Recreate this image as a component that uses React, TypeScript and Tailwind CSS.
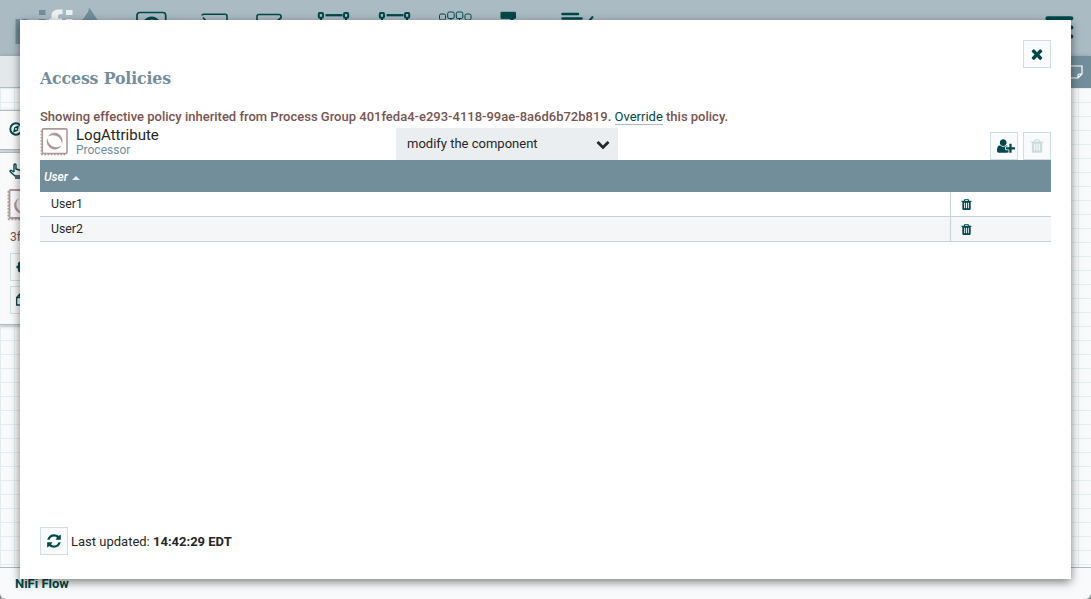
import React from "react";

const TIMES =
  "M1490 1322q0 40-28 68l-136 136q-28 28-68 28t-68-28l-294-294-294 294q-28 28-68 28t-68-28l-136-136q-28-28-28-68t28-68l294-294-294-294q-28-28-28-68t28-68l136-136q28-28 68-28t68 28l294 294 294-294q28-28 68-28t68 28l136 136q28 28 28 68t-28 68l-294 294 294 294q28 28 28 68z";
const REFRESH =
  "M1639 1056q0 5-1 7-64 268-268 434.5t-478 166.5q-146 0-282.5-55t-243.5-157l-129 129q-19 19-45 19t-45-19-19-45v-448q0-26 19-45t45-19h448q26 0 45 19t19 45-19 45l-137 137q71 66 161 102t187 36q134 0 250-65t186-179q11-17 53-117 8-23 30-23h192q13 0 22.5 9.5t9.5 22.5zm25-800v448q0 26-19 45t-45 19h-448q-26 0-45-19t-19-45 19-45l138-138q-148-137-349-137-134 0-250 65t-186 179q-11 17-53 117-8 23-30 23h-199q-13 0-22.5-9.5t-9.5-22.5v-7q65-268 270-434.5t480-166.5q146 0 284 55.5t245 156.5l130-129q19-19 45-19t45 19 19 45z";
const TRASH =
  "M704 1376v-704q0-14-9-23t-23-9h-64q-14 0-23 9t-9 23v704q0 14 9 23t23 9h64q14 0 23-9t9-23zm256 0v-704q0-14-9-23t-23-9h-64q-14 0-23 9t-9 23v704q0 14 9 23t23 9h64q14 0 23-9t9-23zm256 0v-704q0-14-9-23t-23-9h-64q-14 0-23 9t-9 23v704q0 14 9 23t23 9h64q14 0 23-9t9-23zm-544-992h448l-48-117q-7-9-17-11h-317q-10 2-17 11zm928 32v64q0 14-9 23t-23 9h-96v948q0 83-47 143.5t-113 60.5h-832q-66 0-113-58.5t-47-141.5v-952h-96q-14 0-23-9t-9-23v-64q0-14 9-23t23-9h309l70-167q15-37 54-63t79-26h320q40 0 79 26t54 63l70 167h309q14 0 23 9t9 23z";
const USER_PLUS =
  "M704 896q-159 0-271.5-112.5t-112.5-271.5 112.5-271.5 271.5-112.5 271.5 112.5 112.5 271.5-112.5 271.5-271.5 112.5zm960 128h352q13 0 22.5 9.5t9.5 22.5v192q0 13-9.5 22.5t-22.5 9.5h-352v352q0 13-9.5 22.5t-22.5 9.5h-192q-13 0-22.5-9.5t-9.5-22.5v-352h-352q-13 0-22.5-9.5t-9.5-22.5v-192q0-13 9.5-22.5t22.5-9.5h352v-352q0-13 9.5-22.5t22.5-9.5h192q13 0 22.5 9.5t9.5 22.5v352zm-736 224q0 52 38 90t90 38h256v238q-68 50-171 50h-874q-121 0-194-69t-73-190q0-53 3.5-103.5t14-109 26.5-108.5 43-97.5 62-81 85.5-53.5 111.5-20q19 0 39 17 79 61 154.500 91.500t164.500 30.500 164.500-30.500 154.500-91.500q20-17 39-17 132 0 217 96h-223q-52 0-90 38t-38 90v192z";
const CHEVRON =
  "M1683 808l-742 741q-19 19-45 19t-45-19l-742-741q-19-19-19-45.5t19-45.5l166-165q19-19 45-19t45 19l531 531 531-531q19-19 45-19t45 19l166 165q19 19 19 45.5t-19 45.5z";

function Glyph({ d, className, box = "0 0 1792 1792" }: { d: string; className: string; box?: string }) {
  return (
    <svg viewBox={box} className={className} fill="currentColor">
      <path d={d} />
    </svg>
  );
}

function SquareButton({ children, muted = false }: { children: React.ReactNode; muted?: boolean }) {
  return (
    <button
      className={
        muted
          ? "flex size-7 shrink-0 items-center justify-center border border-[#cfdedf] bg-[#f9fafb] text-[#cddbdc]"
          : "flex size-7 shrink-0 items-center justify-center border border-[#cfdedf] bg-[#f9fafb] text-[#004849]"
      }
    >
      {children}
    </button>
  );
}

function ProcessorIcon() {
  return (
    <svg viewBox="0 0 28 28" className="size-7 shrink-0" fill="none" stroke="#ad9897">
      <rect x="2.300" y="0.900" width="24.700" height="24.600" rx="1.200" strokeWidth="1.600" />
      <path d="M1.200 2.500V26M1.200 26.600H26" strokeWidth="1.300" strokeDasharray="1.700 1.500" />
      <path d="M8 8.500C11.500 3.200 19 3.600 21.800 9.500C22.900 12 22.700 14.500 21.900 16.500C21.800 9.500 15.500 5 8 8.500Z" fill="#ad9897" stroke="none" />
      <path d="M21.500 18C18 23 10.500 22.700 7.500 16.800C6.400 14.400 6.700 12 7.500 10C7.600 16.800 14 21.400 21.500 18Z" fill="#ad9897" stroke="none" />
    </svg>
  );
}

function Toolbar() {
  return (
    <header className="h-14 shrink-0 bg-[#aabbc3]">
      <svg width="1091" height="56" viewBox="0 0 1091 56" fill="none" stroke="#004849">
        <g stroke="none">
          <path d="M15.500 19H20v25h-4.500z" fill="#728e9b" />
          <path d="M20 20.500Q24 17 30 20.500z" fill="#728e9b" />
          <rect x="39" y="10" width="6.500" height="5" fill="#728e9b" />
          <rect x="39" y="19" width="6.500" height="5" fill="#728e9b" />
          <path d="M51.500 24V15Q52 9.500 59 9.500h3.500v4.500h-2q-2.500 0-2.500 3v7zM49 18.500h13v3H49z" fill="#eef1f3" />
          <rect x="66" y="10" width="6.500" height="5" fill="#eef1f3" />
          <rect x="66" y="19" width="6.500" height="5" fill="#eef1f3" />
          <path d="M89.500 8L99 22H80.500z" fill="#728e9b" />
          <path d="M88.500 10L82.500 19" stroke="#c8d3d8" strokeWidth="0.8" />
        </g>
        <path d="M137 24V15.500Q137 12.500 140 12.500H163Q165.700 12.500 165.700 15.500V24" strokeWidth="1.700" />
        <path d="M144.500 21.500Q152 14.500 158.500 21.500" strokeWidth="2.800" />
        <path d="M202 15.500Q202 14.300 204 14.300H225Q227 14.300 227 16.300V24M203 17.500L206 21" strokeWidth="1.600" />
        <path d="M257 24V16.500Q257 14.500 259 14.500H279Q281 14.500 281 16.500V18L277 21" strokeWidth="1.600" />
        {[318, 379].map((x) => (
          <g key={x}>
            <rect x={x + 0.800} y="13" width="4.200" height="4.700" rx="0.900" strokeWidth="2" />
            <rect x={x + 26} y="13" width="4.200" height="4.700" rx="0.900" strokeWidth="2" />
            <path d={`M${x + 7.500} 15.200h17`} strokeWidth="2.300" />
            <path d={`M${x + 3} 18v3M${x + 28} 18v3`} strokeWidth="2" />
          </g>
        ))}
        <g strokeWidth="1">
          <rect x="439.500" y="14" width="6" height="6" rx="1.500" />
          <rect x="447.700" y="12" width="6.500" height="6.500" rx="1.500" />
          <rect x="456.300" y="12" width="6.500" height="6.500" rx="1.500" />
          <rect x="465" y="14" width="6" height="6" rx="1.500" />
          <path d="M451 18.500v2M459.500 18.500v2" />
        </g>
        <path d="M501 12.300h14.500v6H513v2l-4-2h-8z" fill="#004849" strokeWidth="1" />
        <path d="M562.500 14h15.500M562.500 18.500h19" strokeWidth="2.500" strokeLinecap="round" />
        <path d="M589.500 20.500L593 16.500" strokeWidth="2" />
        <path d="M1047.500 18.300h23.800M1060 27.500h11.300M1060 36.500h11.300" strokeWidth="4.200" strokeLinecap="round" />
      </svg>
    </header>
  );
}

function Canvas() {
  return (
    <div className="flex h-full w-full flex-col">
      <Toolbar />
      <div className="flex h-8 shrink-0 border-b border-[#aabbc3] bg-[#e3e8eb] shadow-[0_1px_5px_rgba(0,0,0,0.25)]">
        <div className="flex-1" />
        <div className="flex h-8 w-[91px] items-center justify-end bg-[#728e9b] pr-2">
          <svg viewBox="0 0 14 14" className="size-3.5" fill="none" stroke="#fff" strokeWidth="1.200">
            <path d="M1 1H13V9L9 13H1zM13 9H10Q9 9 9 10V13" />
          </svg>
        </div>
      </div>
      <main className="flex-1 bg-[#f9fafb] bg-[linear-gradient(to_right,#e3edee_1px,transparent_1px),linear-gradient(to_bottom,#e3edee_1px,transparent_1px)] bg-[size:14px_14px] bg-[position:0_0] pt-[22px]">
        <section className="flex h-10 w-[260px] items-center border-y border-[#aabbc3] bg-[#f9fafb]/90 pl-[9px] shadow-[0_1px_4px_rgba(0,0,0,0.25)]">
          <svg viewBox="0 0 14 14" className="-mt-0.5 size-3.5" fill="none" stroke="#004849">
            <circle cx="7" cy="7" r="5.700" strokeWidth="1.900" />
            <path d="M10 3.200L8.800 8.800L4 10.800L5.200 5.200Z" fill="#004849" stroke="none" />
            <circle cx="7" cy="7" r="1" fill="#f9fafb" stroke="none" />
          </svg>
        </section>
        <section className="mt-0.5 flex h-[173px] w-[260px] flex-col border-y border-[#aabbc3] bg-[#f9fafb]/90 shadow-[0_1px_4px_rgba(0,0,0,0.25)]">
          <svg viewBox="0 0 16 16" className="mt-[10px] ml-[9px] size-4 shrink-0" fill="none" stroke="#004849" strokeWidth="1.400" strokeLinejoin="round">
            <path d="M5 9V2Q5 1 6 1T7 2V6L12 7.500Q13 8 13 9V11L12 13H6L1 8.500Q1 7 2.500 7.500L5 9M6 15H12" />
          </svg>
          <div className="mt-[10px] ml-[7px] flex h-8">
            <svg viewBox="0 0 32 32" className="size-8" fill="none" stroke="#ad9897">
              <rect x="2.500" y="1" width="28" height="28" rx="1" strokeWidth="1.800" />
              <path d="M1.200 2V30M1 30.500H30" strokeWidth="1.400" strokeDasharray="1.800 1.600" />
              <path d="M12 9Q5 13 8 20Q10 24 16 25Q9 20 9.500 15Q10 11 12 9Z" fill="#ad9897" stroke="none" />
            </svg>
          </div>
          <div className="mt-[8px] ml-[10px] text-[12px] leading-4 text-[#775351]">3f</div>
          <div className="mt-[8px] ml-[10px] flex flex-col gap-[5px]">
            <SquareButton>
              <svg viewBox="0 0 16 16" className="size-4 shrink-0" fill="none" stroke="currentColor">
                <circle cx="7" cy="8" r="4" strokeWidth="3" />
                <path d="M7 1V4M7 12V15M0.500 8H4M11 8H14M2.500 3.500L4 5M10 11L12 13M12 3L10 5M4 11L2.500 12.500" strokeWidth="2.500" />
              </svg>
            </SquareButton>
            <SquareButton>
              <svg viewBox="0 0 16 16" className="size-4 shrink-0" fill="none" stroke="currentColor" strokeWidth="1.300">
                <path d="M0.700 5.500L4 2H9V13H0.700zM4 2V5.500H0.700" />
              </svg>
            </SquareButton>
          </div>
        </section>
      </main>
      <footer className="h-8 shrink-0 border-t border-[#aabbc3] bg-[#f9fafb] pt-2 pl-[15px] text-[13px] leading-4 font-bold text-[#004849]">
        NiFi Flow
      </footer>
    </div>
  );
}

const users = ["User1", "User2"];

function PolicyDialog() {
  return (
    <div className="absolute top-5 left-5 flex h-[559px] w-[1051px] flex-col bg-white p-5 shadow-[0_3px_9px_rgba(0,0,0,0.5)]">
      <div className="flex h-7 justify-end">
        <SquareButton>
          <Glyph d={TIMES} className="size-4" />
        </SquareButton>
      </div>
      <h1 className="h-5 font-['DejaVu_Serif_Condensed','DejaVu_Serif',serif] text-[17.500px] leading-5 font-bold tracking-[-0.130px] whitespace-nowrap text-[#728e9b]">
        Access Policies
      </h1>
      <p className="mt-5 h-[18px] text-[13px] leading-[18px] font-medium whitespace-nowrap text-[#775351]">
        Showing effective policy inherited from Process Group 401feda4-e293-4118-99ae-8a6d6b72b819.{" "}
        <a className="border-b border-[#aabbc3] font-normal text-[#004849]">Override</a> this policy.
      </p>
      <div className="mt-0.5 flex h-8">
        <div className="flex w-[356px]">
          <ProcessorIcon />
          <div className="pl-2">
            <div className="h-[15px] text-[15px] leading-[15px] text-[#262626]">LogAttribute</div>
            <div className="h-[14px] text-[12px] leading-[14px] text-[#728e9b]">Processor</div>
          </div>
        </div>
        <div className="flex h-8 w-[222px] items-center justify-between bg-[#eaeef0] pr-2 pl-[11px] text-[13px] text-[#262626]">
          modify the component
          <Glyph d={CHEVRON} className="size-3.5" />
        </div>
        <div className="ml-auto flex items-end gap-[5px]">
          <SquareButton>
            <Glyph d={USER_PLUS} box="0 0 2048 1792" className="ml-1 h-4 w-[18px] shrink-0" />
          </SquareButton>
          <SquareButton muted>
            <Glyph d={TRASH} className="size-4" />
          </SquareButton>
        </div>
      </div>
      <div className="flex h-8 shrink-0 items-center bg-[#728e9b] pt-px pl-1 text-[12px] font-medium text-white italic">
        User
        <svg viewBox="0 0 8 4" className="mt-0.5 ml-1 h-1 w-2" fill="#e8edef">
          <path d="M0 4L4 0L8 4z" />
        </svg>
      </div>
      {users.map((user) => (
        <div key={user} className="flex h-[25px] border-b border-[#c7d2d7] text-[12.300px] text-[#262626] odd:bg-[#f4f6f7] even:bg-white">
          <div className="flex w-[911px] items-center border-r border-[#c7d2d7] pl-[11px]">{user}</div>
          <div className="flex items-center pl-[9px] text-[#004849]">
            <Glyph d={TRASH} className="size-[13px]" />
          </div>
        </div>
      ))}
      <div className="mt-auto mb-1 flex h-7 items-center gap-[3px] text-[13px] text-[#262626]">
        <SquareButton>
          <Glyph d={REFRESH} className="size-4" />
        </SquareButton>
        <span className="pt-px">
          Last updated: <b className="font-bold">14:42:29 EDT</b>
        </span>
      </div>
    </div>
  );
}

export default function App() {
  return (
    <div className="h-[599px] w-[1091px] bg-[#8e9394]">
      <div className="relative h-full w-full overflow-hidden rounded-b-[6px] font-['Roboto',sans-serif]">
        <Canvas />
        <PolicyDialog />
      </div>
    </div>
  );
}
